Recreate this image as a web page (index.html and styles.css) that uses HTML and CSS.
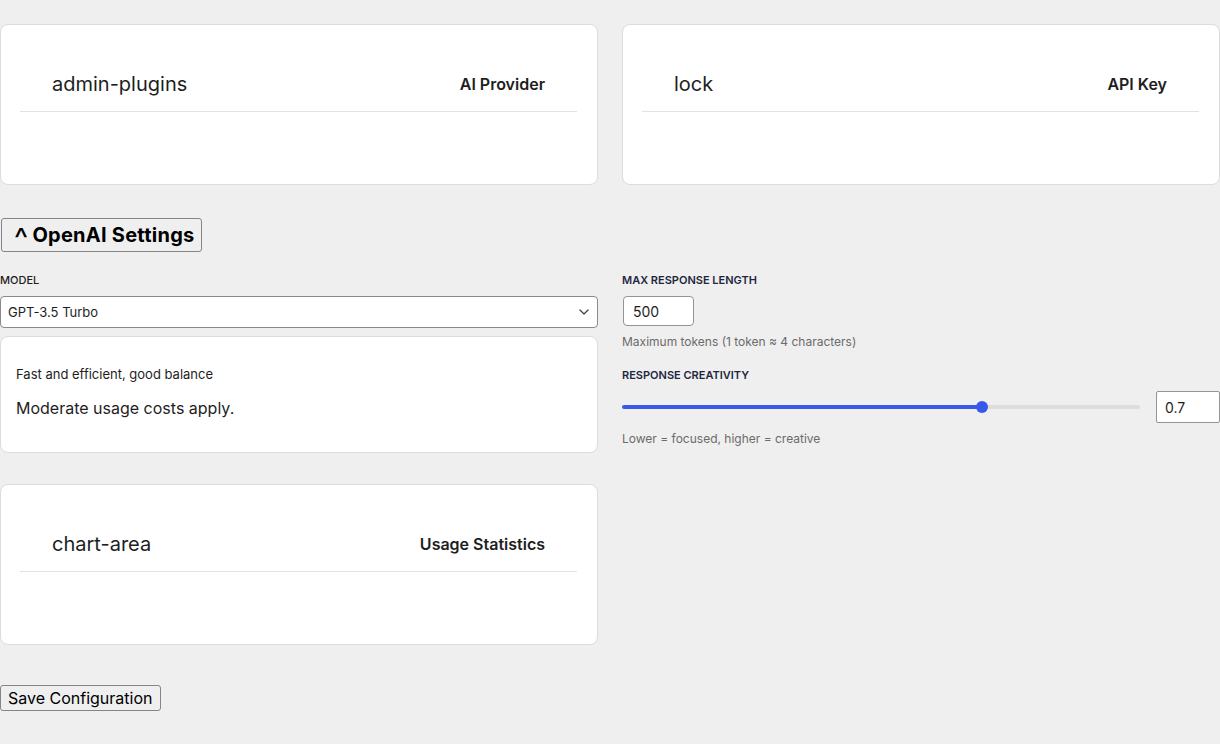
FILE: index.html
```html
<!DOCTYPE html>
<html lang="en">
<head>
<meta charset="utf-8">
<title>AI Settings</title>
<link rel="stylesheet" href="styles.css">
</head>
<body>
<div class="page">
  <div class="grid two">
    <div class="card">
      <div class="card-header">
        <span class="icon-name">admin-plugins</span>
        <span class="card-title">AI Provider</span>
      </div>
      <div class="card-body"></div>
    </div>
    <div class="card">
      <div class="card-header">
        <span class="icon-name">lock</span>
        <span class="card-title">API Key</span>
      </div>
      <div class="card-body"></div>
    </div>
  </div>

  <button class="toggle" type="button"><span class="caret">^</span><span class="toggle-text">OpenAI Settings</span></button>

  <div class="grid two settings">
    <div class="col">
      <label class="field-label dark">Model</label>
      <div class="select-wrap">
        <select class="select">
          <option>GPT-3.5 Turbo</option>
          <option>GPT-4</option>
        </select>
        <svg class="chevron" width="10" height="6" viewBox="0 0 10 6" aria-hidden="true">
          <path d="M1 1l4 4 4-4" fill="none" stroke="#444" stroke-width="1.3" stroke-linecap="round" stroke-linejoin="round"/>
        </svg>
      </div>
      <div class="info-card">
        <p class="info-small">Fast and efficient, good balance</p>
        <p class="info-main">Moderate usage costs apply.</p>
      </div>
    </div>
    <div class="col">
      <label class="field-label">Max Response Length</label>
      <input class="num-input short" type="text" value="500">
      <p class="hint">Maximum tokens (1 token ≈ 4 characters)</p>
      <label class="field-label spaced">Response Creativity</label>
      <div class="slider-row">
        <input class="range" type="range" min="0" max="1" step="0.01" value="0.7">
        <input class="num-input small" type="text" value="0.7">
      </div>
      <p class="hint">Lower = focused, higher = creative</p>
    </div>
  </div>

  <div class="grid two usage">
    <div class="card">
      <div class="card-header">
        <span class="icon-name">chart-area</span>
        <span class="card-title">Usage Statistics</span>
      </div>
      <div class="card-body"></div>
    </div>
  </div>

  <button class="save" type="button">Save Configuration</button>
</div>
</body>
</html>
```
FILE: styles.css
```css
* { box-sizing: border-box; }
html, body {
  margin: 0;
  padding: 0;
  background: #efefef;
  font-family: Inter, "Noto Sans", "Liberation Sans", sans-serif;
  color: #1e1e1e;
  overflow: hidden;
}
.page {
  width: 1220px;
  padding-top: 24px;
  display: flex;
  flex-direction: column;
  align-items: flex-start;
}
.grid.two {
  display: grid;
  grid-template-columns: 598px 598px;
  column-gap: 24px;
  width: 1220px;
}
.card {
  background: #fff;
  border: 1px solid #dcdcdc;
  border-radius: 8px;
  padding: 20px 20px 20px 19px;
}
.card-header {
  display: flex;
  justify-content: space-between;
  align-items: center;
  padding: 27px 32px 15px;
  border-bottom: 1px solid #e2e2e2;
  line-height: 24px;
}
.icon-name {
  font-size: 20px;
  font-weight: 400;
  color: #1e1e1e;
}
.card-title {
  font-size: 16px;
  font-weight: 600;
  color: #1e1e1e;
}
.card-body {
  height: 52px;
}
.toggle {
  margin: 33px 0 0 1px;
  height: 34px;
  padding: 0 7px 0 12px;
  display: flex;
  align-items: center;
  font-family: Inter, "Noto Sans", sans-serif;
  font-size: 20px;
  font-weight: 700;
  line-height: 20px;
  letter-spacing: 0.25px;
  color: #000;
  background: #efefef;
  border: 1px solid #858585;
  border-radius: 3px;
}
.toggle-text {
  line-height: 20px;
}
.caret {
  font-weight: 400;
  font-size: 30px;
  line-height: 20px;
  margin-right: 4px;
  position: relative;
  top: 3px;
}
.settings {
  margin-top: 20px;
}
.col {
  display: flex;
  flex-direction: column;
  align-items: flex-start;
}
.field-label {
  display: block;
  font-size: 11px;
  font-weight: 600;
  line-height: 16px;
  text-transform: uppercase;
  color: #1e2740;
  margin-bottom: 8px;
}
.field-label.dark { color: #1e1e1e; font-weight: 500; }
.field-label.spaced { margin-top: 17px; }
.select-wrap {
  position: relative;
  width: 598px;
  height: 32px;
}
.select {
  -webkit-appearance: none;
  appearance: none;
  width: 598px;
  height: 32px;
  font-family: Inter, "Noto Sans", sans-serif;
  font-size: 13px;
  color: #1e1e1e;
  background: #fff;
  border: 1px solid #8a8a8a;
  border-radius: 4px;
  padding: 0 30px 0 7px;
}
.chevron {
  position: absolute;
  right: 9px;
  top: 13px;
  pointer-events: none;
}
.info-card {
  width: 598px;
  margin-top: 8px;
  background: #fff;
  border: 1px solid #dcdcdc;
  border-radius: 8px;
  padding: 16px 16px 18px 15px;
}
.info-small {
  margin: 13px 0;
  font-size: 13px;
  line-height: 16px;
  color: #1e1e1e;
}
.info-main {
  margin: 16px 0;
  font-size: 16px;
  line-height: 20px;
  color: #1e1e1e;
}
.num-input {
  font-family: Inter, "Noto Sans", sans-serif;
  font-size: 14px;
  color: #1e1e1e;
  background: #fff;
  border: 1px solid #949494;
  border-radius: 4px;
  padding: 0 8px;
}
.num-input.short {
  width: 71px;
  height: 30px;
  margin-left: 1px;
  padding-left: 9px;
}
.num-input.small {
  width: 64px;
  height: 32px;
  border-radius: 2px;
}
.hint {
  margin: 8px 0 0;
  font-size: 12px;
  line-height: 16px;
  color: #6b6b6b;
}
.slider-row {
  display: flex;
  align-items: center;
  gap: 16px;
}
.range {
  -webkit-appearance: none;
  appearance: none;
  width: 518px;
  height: 4px;
  margin: 0;
  border-radius: 2px;
  background: linear-gradient(to right, #3858e9 0%, #3858e9 70.3%, #dddddd 70.3%, #dddddd 100%);
  outline: none;
}
.range::-webkit-slider-thumb {
  -webkit-appearance: none;
  appearance: none;
  width: 12px;
  height: 12px;
  border-radius: 50%;
  background: #3858e9;
  border: none;
}
.usage {
  margin-top: 31px;
}
.save {
  margin-top: 40px;
  height: 26px;
  padding: 0 7px;
  font-family: Inter, "Noto Sans", sans-serif;
  font-size: 16px;
  color: #000;
  background: #efefef;
  border: 1px solid #858585;
  border-radius: 3px;
}
```
